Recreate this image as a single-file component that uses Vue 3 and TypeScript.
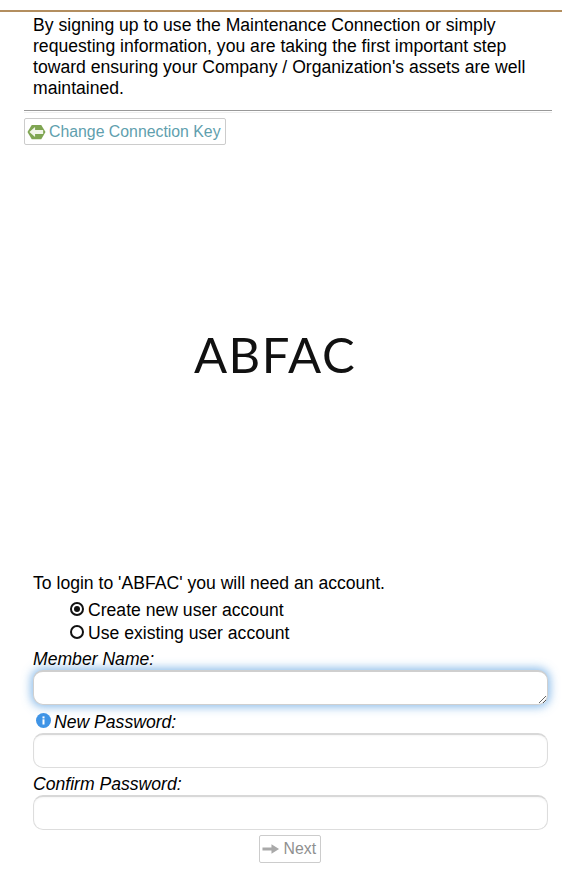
<script setup lang="ts">
const intro =
  "By signing up to use the Maintenance Connection or simply requesting information, you are taking the first important step toward ensuring your Company / Organization's assets are well maintained."
</script>

<template>
  <div class="page">
    <div class="topline"></div>
    <p class="intro">{{ intro }}</p>
    <div class="rule"></div>
    <button class="btn back" type="button">
      <svg width="19" height="16" viewBox="0 0 20 16" class="ico">
        <path d="M5 0.5H15L19.5 8L15 15.5H5L0.5 8Z" fill="#7fa552" />
        <path d="M2.5 8L8.5 2.8V5.8H17V10.2H8.5V13.2Z" fill="#f1f5ea" />
      </svg>
      <span>Change Connection Key</span>
    </button>
    <div class="logo"><span>ABFAC</span></div>
    <div class="form">
      <div class="need">To login to 'ABFAC' you will need an account.</div>
      <div class="radios">
        <label class="radio"><i class="dot on"></i>Create new user account</label>
        <label class="radio"><i class="dot"></i>Use existing user account</label>
      </div>
      <div class="label">Member Name:</div>
      <textarea class="field focused" rows="1"></textarea>
      <div class="label pw">
        <svg width="15" height="15" viewBox="0 0 15 15" class="info">
          <circle cx="7.5" cy="7.5" r="7.5" fill="#3f94e6" />
          <rect x="6.5" y="6.3" width="2" height="5.2" fill="#fff" />
          <rect x="6.5" y="3.4" width="2" height="2" fill="#fff" />
        </svg>
        <span>New Password:</span>
      </div>
      <div class="field"></div>
      <div class="label low">Confirm Password:</div>
      <div class="field"></div>
      <div class="actions">
        <button class="btn next" type="button">
          <svg width="18" height="12" viewBox="0 0 19 12">
            <path d="M0.5 4.5H10V1L18 6L10 11V7.5H0.5Z" fill="#a9a9a9" />
          </svg>
          <span>Next</span>
        </button>
      </div>
    </div>
  </div>
</template>

<style scoped>
.page {
  width: 562px;
  height: 877px;
  overflow: hidden;
  background: #fff;
  font-family: "Liberation Sans", Arial, sans-serif;
  font-size: 17.6px;
  color: #000;
  box-sizing: border-box;
  padding-top: 10px;
}
.topline {
  height: 2px;
  background: #b38e5f;
}
.intro {
  margin: 3px 0 0;
  padding: 0 24px 0 33px;
  line-height: 21px;
}
.rule {
  margin: 11px 10px 0 24px;
  height: 1px;
  border-top: 1px solid #999;
  border-bottom: 1px solid #eee;
}
.btn {
  display: flex;
  align-items: center;
  box-sizing: border-box;
  background: #fff;
  border: 1px solid #ccc;
  border-radius: 2px;
  font-family: inherit;
  font-size: 15.84px;
  padding: 0;
}
.back {
  margin: 5px 0 0 24px;
  width: 202px;
  height: 27px;
  padding: 0 0 0 2px;
  gap: 3px;
  color: #5f9fae;
}
.logo {
  height: 428px;
  display: flex;
  align-items: center;
  justify-content: center;
  font-family: Lato, sans-serif;
  font-weight: 400;
  font-size: 49px;
  line-height: 1;
  color: #111;
}
.logo span {
  filter: blur(0.6px);
  display: block;
  margin: -10px 12px 0 0;
  letter-spacing: 1.5px;
}
.form {
  padding: 0 14px 0 33px;
}
.need {
  line-height: 21px;
}
.radios {
  padding: 6px 0 0 37px;
  display: flex;
  flex-direction: column;
  gap: 2px;
}
.radio {
  display: flex;
  align-items: center;
  height: 21px;
  gap: 4px;
}
.dot {
  display: block;
  box-sizing: border-box;
  width: 14px;
  height: 14px;
  border: 2px solid #111;
  border-radius: 50%;
  margin-top: -4px;
  position: relative;
}
.dot.on::after {
  content: "";
  position: absolute;
  left: 2px;
  top: 2px;
  width: 6px;
  height: 6px;
  border-radius: 50%;
  background: #111;
}
.label {
  font-style: italic;
  font-size: 17.6px;
  line-height: 21px;
  margin-top: 5px;
  height: 21px;
}
.low {
  line-height: 23px;
}
.pw {
  display: flex;
  align-items: flex-start;
  gap: 3px;
  margin-top: 6px;
  padding-left: 3px;
  line-height: 23px;
}
.info {
  margin-top: 2px;
}
.field {
  display: block;
  width: 515px;
  height: 35px;
  box-sizing: border-box;
  margin: 1px 0 0;
  padding: 0;
  border: 1px solid #ddd;
  border-top: 2px solid #d8d8d8;
  border-radius: 10px;
  background: #fff;
  box-shadow: inset 0 1px 2px rgba(0, 0, 0, 0.04);
  outline: none;
}
.focused {
  margin-top: 0;
  resize: vertical;
  border-color: #cfcfcf;
  box-shadow: 0 0 10px 2px rgba(90, 160, 225, 0.7);
}
.actions {
  display: flex;
  justify-content: center;
  margin-top: 5px;
  padding-right: 2px;
}
.next {
  width: 62px;
  height: 28px;
  padding-left: 2px;
  gap: 4px;
  color: #8f8f8f;
}
</style>

<style>
html,
body {
  margin: 0;
  background: #fff;
}
</style>
